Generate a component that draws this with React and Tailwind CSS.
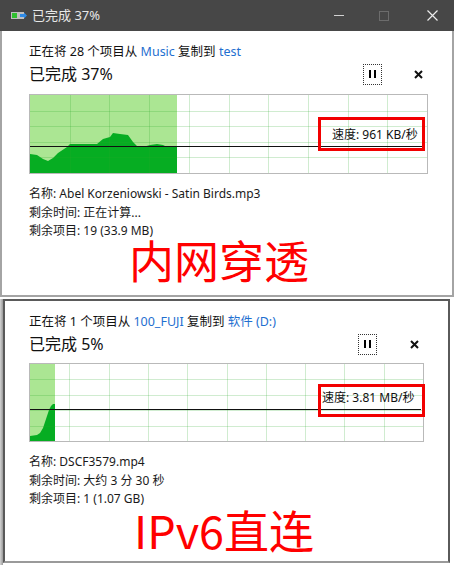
import React from 'react'

const FONT = { fontFamily: '"Noto Sans", "Noto Sans CJK SC", sans-serif' }

function SpeedChart({ width, height, greenW, lineY, area, box, text, textLeft, textTop }) {
  const iw = width - 2
  const ih = height - 2
  const cols = Array.from({ length: 9 }, (_, i) => ((i + 1) * iw) / 10)
  const rows = Array.from({ length: 4 }, (_, i) => ((i + 1) * ih) / 5)
  const pts = area.map((p) => p.join(',')).join(' ')

  return (
    <div className="relative border border-[#b9b9b9] bg-white" style={{ width, height }}>
      <svg width={iw} height={ih} className="block">
        <rect x="0" y="0" width={greenW} height={ih} fill="#abe693" />
        <polygon points={`${pts} ${greenW},${ih} 0,${ih}`} fill="#06ad22" />
        {cols.map((x) => (
          <line key={'c' + x} x1={Math.round(x) + 0.5} y1="0" x2={Math.round(x) + 0.5} y2={ih} stroke="rgba(40,170,40,0.22)" />
        ))}
        {rows.map((y) => (
          <line key={'r' + y} x1="0" y1={Math.round(y) + 0.5} x2={iw} y2={Math.round(y) + 0.5} stroke="rgba(40,170,40,0.22)" />
        ))}
        <line x1="0" y1={lineY + 0.5} x2={iw - 2} y2={lineY + 0.5} stroke="#111" />
      </svg>
      <span
        className="absolute text-[12px] leading-[16px] text-[#111] whitespace-nowrap"
        style={{ left: textLeft, top: textTop }}
      >
        {text}
      </span>
      <div
        className="absolute border-[3px] border-[#f20000]"
        style={{ left: box.left, top: box.top, width: box.w, height: box.h }}
      />
    </div>
  )
}

function PauseButton() {
  return (
    <div className="w-[19px] h-[21px] border border-dotted border-[#333] flex items-center justify-center gap-[3px]">
      <div className="w-[2px] h-[8px] bg-black" />
      <div className="w-[2px] h-[8px] bg-black" />
    </div>
  )
}

function CloseMark() {
  return (
    <svg width="9" height="9" viewBox="0 0 9 9">
      <path d="M1 1 L8 8 M8 1 L1 8" stroke="#111" strokeWidth="2" />
    </svg>
  )
}

export default function App() {
  return (
    <div className="w-[454px] h-[565px] bg-white overflow-hidden flex flex-col" style={FONT}>
      {/* top dialog */}
      <div className="h-[297px] flex flex-col border-x-2 border-b-2 border-[#a4a4a4] shrink-0">
        <div className="h-[31px] bg-[#474747] flex items-center shrink-0 -mx-[2px]">
          <svg width="16" height="9" viewBox="0 0 16 9" className="ml-[11px]">
            <rect x="0" y="1" width="13" height="7" fill="#bfbfbf" />
            <rect x="1" y="2" width="5" height="5" fill="#2fc02f" />
            <path d="M9 3 H13 V1.5 L16 4.5 L13 7.5 V6 H9 Z" fill="#2e8ae6" />
          </svg>
          <span className="ml-[5px] text-[13px] text-[#e8e8e8] leading-none">已完成 37%</span>
          <div className="flex-1" />
          <div className="w-[10px] h-px bg-[#d2d2d2] mr-[35px]" />
          <div className="w-[10px] h-[10px] border border-[#6c6c6c] mr-[38px]" />
          <svg width="11" height="11" viewBox="0 0 11 11" className="mr-[16px]">
            <path d="M0.5 0.5 L10.5 10.5 M10.5 0.5 L0.5 10.5" stroke="#ececec" strokeWidth="1.2" />
          </svg>
        </div>

        <div className="pl-[27px] flex flex-col">
          <div className="mt-[13px] text-[12.5px] leading-[16px] text-[#111]">
            正在将 28 个项目从 <span className="text-[#1f6fd0]">Music</span> 复制到{' '}
            <span className="text-[#1f6fd0]">test</span>
          </div>
          <div className="mt-[3px] w-[399px] h-[22px] flex items-center">
            <span className="flex-1 text-[16px] text-[#111]">已完成 37%</span>
            <PauseButton />
            <div className="ml-[32px] mr-[5px] flex items-center">
              <CloseMark />
            </div>
          </div>
          <div className="mt-[9px]">
            <SpeedChart
              width={399}
              height={80}
              greenW={147}
              lineY={51}
              area={[
                [0, 59], [7, 60], [13, 64], [18, 66], [23, 63], [28, 58], [37, 52], [40, 49],
                [67, 49], [73, 44], [80, 42], [83, 38], [90, 39], [98, 40], [103, 47], [108, 52],
                [113, 52], [120, 50], [127, 49], [133, 50], [137, 52], [147, 52],
              ]}
              box={{ left: 288, top: 22, w: 107, h: 34 }}
              text="速度: 961 KB/秒"
              textLeft={302}
              textTop={32}
            />
          </div>
          <div className="mt-[11px] text-[12px] leading-[18.5px] text-[#1a1a1a]">
            <div>名称: Abel Korzeniowski - Satin Birds.mp3</div>
            <div>剩余时间: 正在计算...</div>
            <div>剩余项目: 19 (33.9 MB)</div>
          </div>
          <div className="ml-[100px] mt-[1px] text-[45px] leading-[36px] text-[#ff0000]" style={{ fontFamily: '"Noto Sans CJK SC", sans-serif' }}>
            内网穿透
          </div>
        </div>
      </div>

      {/* bottom dialog */}
      <div className="flex-1 flex pt-[2px]">
        <div className="w-[3px] bg-gradient-to-r from-[#d4d4d4] to-[#9a9a9a]" />
        <div className="w-[447px] h-[264px] border-2 border-[#5a5a5a] border-b-[#9a9a9a] flex flex-col pl-[24px]">
          <div className="mt-[13px] text-[12.5px] leading-[16px] text-[#111]">
            正在将 1 个项目从 <span className="text-[#1f6fd0]">100_FUJI</span> 复制到{' '}
            <span className="text-[#1f6fd0]">软件 (D:)</span>
          </div>
          <div className="mt-[3px] w-[395px] h-[22px] flex items-center">
            <span className="flex-1 text-[16px] text-[#111]">已完成 5%</span>
            <PauseButton />
            <div className="ml-[33px] mr-[5px] flex items-center">
              <CloseMark />
            </div>
          </div>
          <div className="mt-[8px]">
            <SpeedChart
              width={395}
              height={79}
              greenW={25}
              lineY={45}
              area={[[0, 72], [7, 71], [10, 69], [13, 64], [15, 58], [17, 52], [19, 46], [21, 42], [23, 40], [25, 40]]}
              box={{ left: 288, top: 20, w: 107, h: 33 }}
              text="速度: 3.81 MB/秒"
              textLeft={292}
              textTop={26}
            />
          </div>
          <div className="mt-[11px] text-[12px] leading-[18.5px] text-[#1a1a1a]">
            <div>名称: DSCF3579.mp4</div>
            <div>剩余时间: 大约 3 分 30 秒</div>
            <div>剩余项目: 1 (1.07 GB)</div>
          </div>
          <div className="ml-[105px] mt-[3px] text-[45px] leading-[36px] text-[#ff0000]" style={{ fontFamily: '"Noto Sans CJK SC", sans-serif' }}>
            IPv6直连
          </div>
        </div>
      </div>
    </div>
  )
}
